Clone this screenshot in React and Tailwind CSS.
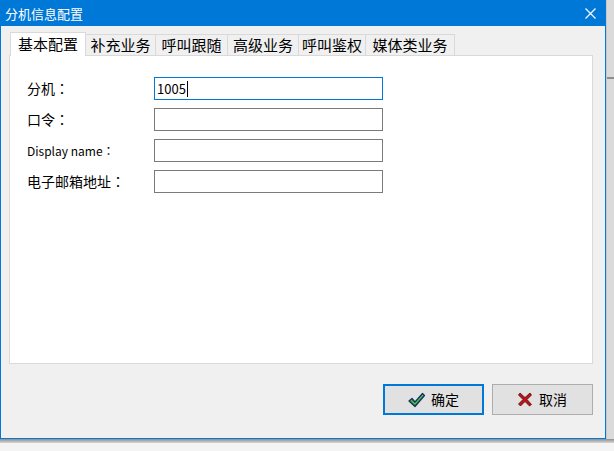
import React from "react";

const tabs = [
  { label: "补充业务", w: "w-[70px]" },
  { label: "呼叫跟随", w: "w-[72px]" },
  { label: "高级业务", w: "w-[71px]" },
  { label: "呼叫鉴权", w: "w-[67px]" },
  { label: "媒体类业务", w: "w-[89px]" },
];

const fields = [
  { label: "分机", value: "1005", focused: true },
  { label: "口令", value: "" },
  { label: "Display name", value: "", small: true },
  { label: "电子邮箱地址", value: "" },
];

function CheckIcon() {
  return (
    <svg width="17" height="16" viewBox="0 0 17 16">
      <path d="M1 9 L4 6.5 L7 10 L14.5 1.5 L16.5 3.5 L7 14.5 Z" fill="#1f9a1f" stroke="#1b2a6b" strokeWidth="1.2" strokeLinejoin="round" />
      <path d="M3 8.5 L7 12 L15 3" fill="none" stroke="#5fd35f" strokeWidth="1" />
    </svg>
  );
}

function CrossIcon() {
  return (
    <svg width="14" height="15" viewBox="0 0 14 15">
      <path d="M2 1 L7 5.5 L12 1 L13.5 3 L9 7.5 L13.5 12.5 L11.5 14 L7 9.5 L2.5 14 L0.5 12 L5 7.5 L0.5 3 Z" fill="#b8141a" stroke="#5e0a0c" strokeWidth="0.8" strokeLinejoin="round" />
    </svg>
  );
}

function Colon() {
  // full-width colon, centred in its cell as on Windows
  return <span className="font-['Noto_Sans_CJK_JP',sans-serif]">：</span>;
}

export default function App() {
  const font = "font-['Microsoft_YaHei','Noto_Sans_CJK_SC',sans-serif]";

  return (
    <div className={`w-[614px] h-[451px] bg-[#f2f2f2] flex flex-col overflow-hidden ${font}`}>
      <div className="flex">
        {/* dialog window */}
        <div className="w-[606px] h-[439px] flex flex-col border-x border-b border-[#0078d7]">
          <div className="h-[26px] bg-[#0078d7] flex items-center justify-between pl-[4px] pr-[9px] text-white text-[13px] leading-none">
            <span>分机信息配置</span>
            <svg width="11" height="11" viewBox="0 0 11 11">
              <path d="M0.5 0.5 L10.5 10.5 M10.5 0.5 L0.5 10.5" stroke="white" strokeWidth="1.2" />
            </svg>
          </div>

          <div className="flex-1 bg-[#f0f0f0] pl-[8px] pt-[6px] flex flex-col">
            {/* tab strip */}
            <div className="flex items-end h-[23px] pl-px">
              <div className="w-[76px] h-[24px] bg-white border border-b-0 border-[#d9d9d9] flex items-center justify-center text-[15px] text-black relative z-10 -mb-px pb-[1px]">
                基本配置
              </div>
              {tabs.map((t) => (
                <div
                  key={t.label}
                  className={`${t.w} h-[21px] bg-[#f0f0f0] border border-l-0 border-b-0 border-[#d9d9d9] flex items-center justify-center text-[15px] text-black`}
                >
                  {t.label}
                </div>
              ))}
            </div>

            {/* tab panel */}
            <div className="w-[584px] h-[309px] bg-white border border-[#d9d9d9] pt-[21px] pl-[17px] flex flex-col gap-[8px]">
              {fields.map((f) => (
                <div key={f.label} className="flex items-center h-[23px]">
                  <div className={`w-[127px] text-black ${f.small ? "text-[12px]" : "text-[14px]"}`}>
                    {f.label}
                    <Colon />
                  </div>
                  <div
                    className={`w-[229px] h-[23px] flex items-center pl-[2px] text-[13px] text-black ${
                      f.focused ? "border border-[#0078d7]" : "border border-[#7a7a7a]"
                    }`}
                  >
                    {f.value}
                    {f.focused && <span className="w-px h-[16px] bg-black ml-px" />}
                  </div>
                </div>
              ))}
            </div>

            {/* buttons */}
            <div className="w-[584px] flex justify-end gap-[8px] mt-[20px]">
              <button className="w-[101px] h-[31px] bg-[#e1e1e1] border-2 border-[#0078d7] flex items-center justify-center gap-[6px] text-[14px] text-black">
                <CheckIcon />
                <span>确定</span>
              </button>
              <button className="w-[101px] h-[31px] bg-[#e1e1e1] border border-[#adadad] flex items-center justify-center gap-[7px] text-[14px] text-black">
                <CrossIcon />
                <span>取消</span>
              </button>
            </div>
          </div>
        </div>

        {/* desktop strip on the right */}
        <div className="flex-1 h-[439px] bg-[#dadada] border-l border-[#c8c8c8] flex flex-col">
          <div className="h-[77px]" />
          <div className="h-[2px] border-y border-[#8c8c8c]" />
        </div>
      </div>

      {/* shadow under window */}
      <div className="h-[4px] bg-gradient-to-b from-[#8f8f8f] to-[#d6d6d6]" />
      <div className="flex-1 bg-[#f4f4f4]" />
    </div>
  );
}
